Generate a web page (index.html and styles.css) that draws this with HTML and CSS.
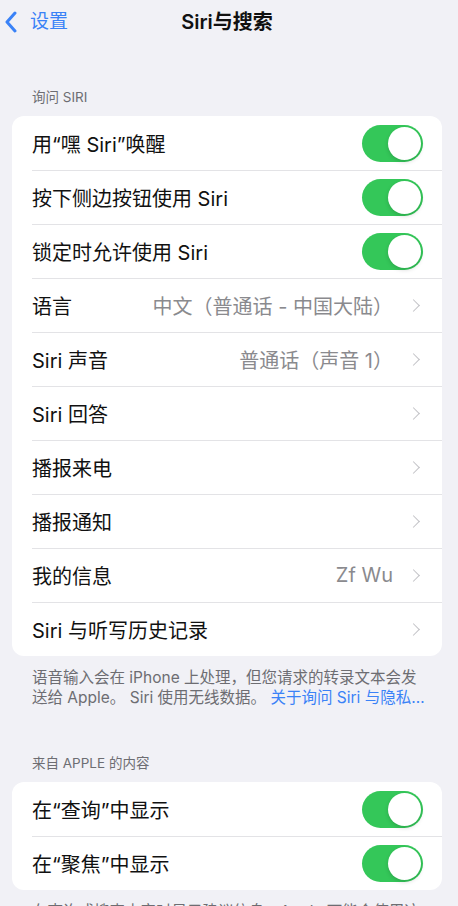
FILE: index.html
```html
<!DOCTYPE html>
<html lang="zh-CN">
<head>
  <meta charset="UTF-8">
  <title>Siri与搜索</title>
  <link rel="stylesheet" href="styles.css">
</head>
<body>
  <header class="navbar">
    <a class="back" href="#">
      <svg class="back-icon" width="14" height="22" viewBox="0 0 14 22">
        <polyline points="11,2 3,11 11,20" fill="none" stroke="#3a82f7" stroke-width="3" stroke-linecap="round" stroke-linejoin="round"/>
      </svg>
      <span>设置</span>
    </a>
    <h1 class="title">Siri与搜索</h1>
  </header>

  <main class="page">
    <!-- Ask Siri -->
    <h2 class="group-title">询问 SIRI</h2>
    <ul class="group">
      <li class="row"><span class="label">用“嘿 Siri”唤醒</span><span class="toggle on"></span></li>
      <li class="row"><span class="label">按下侧边按钮使用 Siri</span><span class="toggle on"></span></li>
      <li class="row"><span class="label">锁定时允许使用 Siri</span><span class="toggle on"></span></li>
      <li class="row link"><span class="label">语言</span><span class="value">中文（普通话 - 中国大陆）</span><span class="chevron"></span></li>
      <li class="row link"><span class="label">Siri 声音</span><span class="value">普通话（声音 1）</span><span class="chevron"></span></li>
      <li class="row link"><span class="label">Siri 回答</span><span class="value"></span><span class="chevron"></span></li>
      <li class="row link"><span class="label">播报来电</span><span class="value"></span><span class="chevron"></span></li>
      <li class="row link"><span class="label">播报通知</span><span class="value"></span><span class="chevron"></span></li>
      <li class="row link"><span class="label">我的信息</span><span class="value">Zf Wu</span><span class="chevron"></span></li>
      <li class="row link"><span class="label">Siri 与听写历史记录</span><span class="value"></span><span class="chevron"></span></li>
    </ul>
    <p class="group-note fixed">语音输入会在 iPhone 上处理，但您请求的转录文本会发<br>送给 Apple。 Siri 使用无线数据。 <a href="#">关于询问 Siri 与隐私…</a></p>

    <!-- Content from Apple -->
    <h2 class="group-title spaced">来自 APPLE 的内容</h2>
    <ul class="group">
      <li class="row"><span class="label">在“查询”中显示</span><span class="toggle on"></span></li>
      <li class="row"><span class="label">在“聚焦”中显示</span><span class="toggle on"></span></li>
    </ul>
    <p class="group-note">在查询或搜索内容时显示建议信息，Apple 可能会使用这些信息改进建议。</p>
  </main>
</body>
</html>
```

FILE: styles.css
```css
/* Global Styles */
body {
  margin: 0;
  padding: 0;
  background: #f1f1f6;
  color: #111;
  font-family: Inter, "Noto Sans CJK SC", sans-serif;
  overflow: hidden;
}

/* Navigation bar */
.navbar {
  height: 44px;
  display: flex;
  align-items: center;
  justify-content: center;
  position: relative;
}

.back {
  position: absolute;
  left: 4px;
  top: 11px;
  display: flex;
  align-items: center;
  gap: 12px;
  color: #3a82f7;
  text-decoration: none;
  font-size: 19px;
  line-height: 22px;
}

.title {
  margin: 0 0 0 -4px;
  font-size: 20px;
  font-weight: 600;
  line-height: 24px;
}

/* Page content */
.page {
  padding: 44px 16px 0 12px;
}

.group-title {
  margin: 0 0 10px 20px;
  font-size: 13.5px;
  font-weight: 400;
  line-height: 18px;
  color: #6d6d72;
}

.group-title.spaced {
  margin-top: 46px;
}

.group {
  list-style: none;
  margin: 0;
  padding: 0;
  background: #fff;
  border-radius: 12px;
  overflow: hidden;
}

.row {
  height: 54px;
  display: flex;
  align-items: center;
  padding: 0 19px 0 20px;
  font-size: 20px;
  position: relative;
}

.row + .row::before {
  content: "";
  position: absolute;
  left: 20px;
  right: 0;
  top: 0;
  border-top: 1px solid #e3e3e6;
}

.label {
  flex: 1;
  white-space: nowrap;
}

.value {
  color: #8a8a8e;
  white-space: nowrap;
  margin-right: 16px;
}

.chevron {
  width: 8px;
  height: 8px;
  border-right: 1.5px solid #c2c2c6;
  border-top: 1.5px solid #c2c2c6;
  transform: rotate(45deg);
  margin-right: 5px;
}

/* Switch */
.toggle {
  width: 61px;
  height: 37px;
  border-radius: 19px;
  background: #e5e5ea;
  position: relative;
}

.toggle.on {
  background: #34c759;
}

.toggle::after {
  content: "";
  position: absolute;
  top: 2px;
  left: 2px;
  width: 33px;
  height: 33px;
  border-radius: 50%;
  background: #fff;
  box-shadow: 0 2px 4px rgba(0, 0, 0, 0.15);
}

.toggle.on::after {
  left: 26px;
}

.group-note {
  margin: 12px 20px 0 20px;
  font-size: 15.5px;
  line-height: 20px;
  color: #6d6d72;
}

.group-note.fixed {
  white-space: nowrap;
}

.group-note a {
  color: #3a82f7;
  text-decoration: none;
}
```
